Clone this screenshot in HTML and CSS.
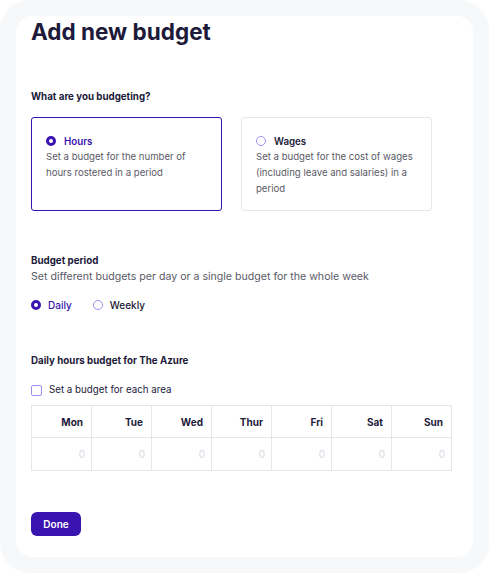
FILE: index.html
```html
<!DOCTYPE html>
<html>
<head>
<meta charset="utf-8">
<link rel="stylesheet" href="styles.css">
</head>
<body>
<div class="frame">
  <div class="card">
    <h1 class="title">Add new budget</h1>

    <section class="section-type">
      <h2 class="label">What are you budgeting?</h2>
      <div class="options">
        <div class="option selected">
          <div class="option-head"><span class="radio on"></span><span class="option-name">Hours</span></div>
          <p class="option-desc">Set a budget for the number of hours rostered in a period</p>
        </div>
        <div class="option">
          <div class="option-head"><span class="radio"></span><span class="option-name">Wages</span></div>
          <p class="option-desc">Set a budget for the cost of wages (including leave and salaries) in a period</p>
        </div>
      </div>
    </section>

    <section class="section-period">
      <h2 class="label">Budget period</h2>
      <p class="hint">Set different budgets per day or a single budget for the whole week</p>
      <div class="radios">
        <label class="radio-item active"><span class="radio on"></span>Daily</label>
        <label class="radio-item"><span class="radio"></span>Weekly</label>
      </div>
    </section>

    <section class="section-table">
      <h2 class="label">Daily hours budget for The Azure</h2>
      <label class="check-item"><span class="checkbox"></span>Set a budget for each area</label>
      <div class="grid">
        <div class="th">Mon</div><div class="th">Tue</div><div class="th">Wed</div><div class="th">Thur</div><div class="th">Fri</div><div class="th">Sat</div><div class="th">Sun</div>
        <div class="td">0</div><div class="td">0</div><div class="td">0</div><div class="td">0</div><div class="td">0</div><div class="td">0</div><div class="td">0</div>
      </div>
    </section>

    <button class="btn">Done</button>
  </div>
</div>
</body>
</html>
```

FILE: styles.css
```css
* { box-sizing: border-box; }
html, body { margin: 0; padding: 0; background: #ffffff; }
body {
  font-family: Inter, "Noto Sans", sans-serif;
  color: #1d1a3a;
}
.frame {
  width: 489px;
  height: 573px;
  background: #f7f8fa;
  border-radius: 30px;
  padding: 16px;
}
.card {
  background: #ffffff;
  border-radius: 16px;
  height: 541px;
  padding: 0 15px;
  display: flex;
  flex-direction: column;
}
.title {
  margin: 0;
  font-size: 22.5px;
  font-weight: 700;
  line-height: 32px;
  color: #1d1a3a;
}
.label {
  margin: 0;
  font-size: 9.75px;
  font-weight: 700;
  line-height: 16px;
  color: #1d1a3a;
}
.section-type { margin-top: 41px; }
.options {
  display: flex;
  gap: 19px;
  margin-top: 12px;
}
.option {
  width: 191px;
  height: 94px;
  border: 1px solid #e6e6ea;
  border-radius: 3px;
  padding: 15px 14px 0 14px;
}
.option.selected { border-color: #3a14b0; }
.option-head {
  display: flex;
  align-items: center;
  gap: 8px;
  height: 16px;
}
.option-name {
  font-size: 9.75px;
  font-weight: 600;
  color: #1d1a3a;
}
.option.selected .option-name { color: #3a14b0; }
.option-desc {
  margin: 0;
  font-size: 9.6px;
  line-height: 16px;
  color: #5a5a66;
}
.radio {
  width: 10px;
  height: 10px;
  border-radius: 50%;
  border: 1px solid #a48bf2;
  flex: none;
  display: inline-block;
}
.radio.on {
  border: 3px solid #3a14b0;
  background: #ffffff;
}
.section-period { margin-top: 42px; }
.hint {
  margin: 0;
  font-size: 10.6px;
  line-height: 16px;
  color: #5a5a66;
}
.radios {
  display: flex;
  gap: 21px;
  margin-top: 12px;
  height: 16px;
  align-items: center;
}
.radio-item {
  display: flex;
  align-items: center;
  gap: 7px;
  font-size: 10px;
  font-weight: 500;
  color: #1d1a3a;
}
.radio-item.active { color: #3a14b0; }
.section-table { margin-top: 40px; }
.check-item {
  display: flex;
  align-items: center;
  gap: 7px;
  margin-top: 13px;
  font-size: 9.75px;
  line-height: 16px;
  color: #1d1a3a;
}
.checkbox {
  width: 11px;
  height: 11px;
  border: 1px solid #a48bf2;
  border-radius: 2px;
  flex: none;
}
.grid {
  margin-top: 7px;
  width: 421px;
  display: grid;
  grid-template-columns: repeat(7, 1fr);
  border-top: 1px solid #e6e6ea;
  border-left: 1px solid #e6e6ea;
}
.th, .td {
  border-right: 1px solid #e6e6ea;
  border-bottom: 1px solid #e6e6ea;
  text-align: right;
  padding: 0 8px;
  font-size: 10px;
}
.th {
  height: 32px;
  line-height: 33px;
  font-weight: 700;
  color: #1d1a3a;
}
.td {
  height: 33px;
  line-height: 32px;
  color: #d8d8dc;
  padding-right: 6px;
}
.btn {
  align-self: flex-start;
  margin-top: 41px;
  width: 50px;
  height: 24px;
  border: none;
  border-radius: 6px;
  background: #3a14b0;
  color: #ffffff;
  font-family: Inter, sans-serif;
  font-size: 10px;
  font-weight: 600;
  padding: 0;
}
```
